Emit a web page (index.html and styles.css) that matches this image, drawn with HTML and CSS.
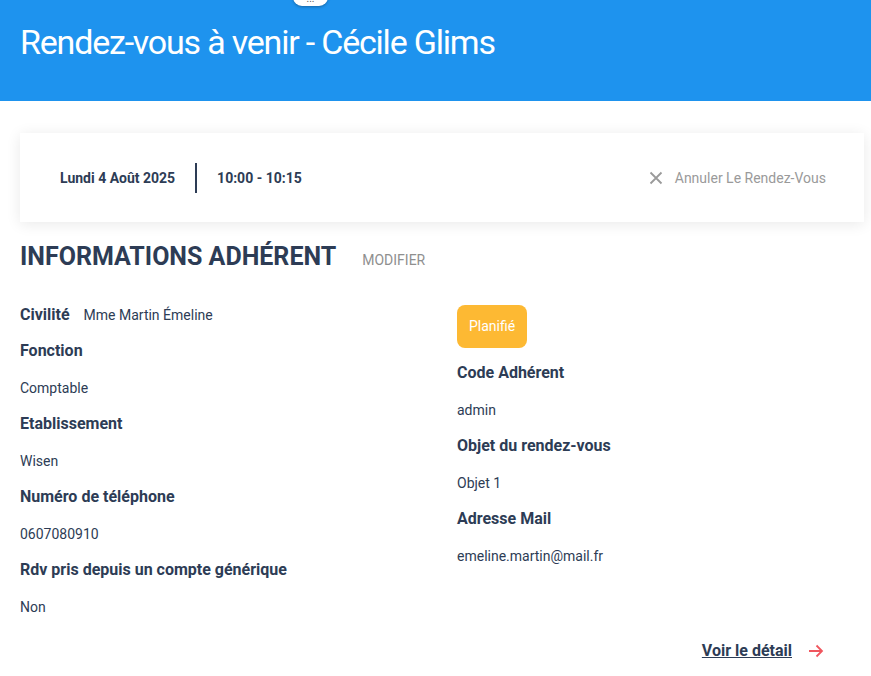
FILE: index.html
```html
<!DOCTYPE html>
<html lang="fr">
<head>
    <meta charset="UTF-8">
    <title>Rendez-vous à venir</title>
    <link rel="stylesheet" href="styles.css">
</head>
<body>
    <div class="topbar">
        <div class="handle">...</div>
        <h1>Rendez-vous à venir - Cécile Glims</h1>
    </div>

    <div class="page">
        <!-- Date / heure -->
        <div class="slot-card">
            <span class="slot-date">Lundi 4 Août 2025</span>
            <span class="slot-sep"></span>
            <span class="slot-time">10:00 - 10:15</span>
            <a class="cancel" href="#">
                <svg width="14" height="14" viewBox="0 0 14 14"><path d="M1.5 1.5 L12.5 12.5 M12.5 1.5 L1.5 12.5" stroke="#9a9a9a" stroke-width="1.8" fill="none"/></svg>
                Annuler Le Rendez-Vous
            </a>
        </div>

        <div class="section-head">
            <h2>INFORMATIONS ADHÉRENT</h2>
            <a class="edit" href="#">MODIFIER</a>
        </div>

        <div class="info-grid">
            <div class="col">
                <div class="inline-field">
                    <span class="label">Civilité</span>
                    <span class="value">Mme Martin Émeline</span>
                </div>
                <div class="label">Fonction</div>
                <div class="value">Comptable</div>
                <div class="label">Etablissement</div>
                <div class="value">Wisen</div>
                <div class="label">Numéro de téléphone</div>
                <div class="value">0607080910</div>
                <div class="label">Rdv pris depuis un compte générique</div>
                <div class="value">Non</div>
            </div>
            <div class="col">
                <div><span class="status">Planifié</span></div>
                <div class="label">Code Adhérent</div>
                <div class="value">admin</div>
                <div class="label">Objet du rendez-vous</div>
                <div class="value">Objet 1</div>
                <div class="label">Adresse Mail</div>
                <div class="value">emeline.martin@mail.fr</div>
            </div>
        </div>

        <div class="footer-link">
            <a class="detail" href="#">Voir le détail</a>
            <svg width="16" height="14" viewBox="0 0 16 14"><path d="M1 7 H14 M8.5 1.5 L14 7 L8.5 12.5" stroke="#f0565e" stroke-width="1.8" fill="none"/></svg>
        </div>
    </div>
</body>
</html>
```

FILE: styles.css
```css
body {
    margin: 0;
    font-family: Roboto, 'Liberation Sans', sans-serif;
    color: #2d3c55;
    background: #ffffff;
}
a {
    text-decoration: none;
}
.topbar {
    position: relative;
    height: 101px;
    background: #1e93ee;
    box-sizing: border-box;
    padding: 22px 20px 0;
}
.topbar h1 {
    margin: 0;
    font-weight: 400;
    font-size: 34px;
    color: #ffffff;
    letter-spacing: -1.2px;
}
.handle {
    position: absolute;
    left: 293px;
    top: -12px;
    width: 35px;
    height: 18px;
    border-radius: 9px;
    background: #ffffff;
    box-shadow: 0 1px 3px rgba(0, 0, 0, 0.3);
    font-size: 10px;
    line-height: 22px;
    text-align: center;
    color: #555;
}
.page {
    padding: 32px 7px 0 20px;
}
.slot-card {
    display: flex;
    align-items: center;
    height: 89px;
    padding: 0 38px 0 40px;
    background: #ffffff;
    box-shadow: 0 2px 14px rgba(0, 0, 0, 0.09);
    font-size: 14px;
    font-weight: 700;
}
.slot-sep {
    width: 2px;
    height: 30px;
    background: #2d3c55;
    margin: 0 20px;
}
.cancel {
    margin-left: auto;
    display: flex;
    align-items: center;
    gap: 12px;
    font-size: 14px;
    font-weight: 400;
    color: #9a9a9a;
}
.section-head {
    display: flex;
    align-items: baseline;
    gap: 26px;
    margin-top: 20px;
}
.section-head h2 {
    margin: 0;
    font-size: 25px;
    font-weight: 700;
}
.edit {
    font-size: 14px;
    color: #8f8f8f;
}
.info-grid {
    display: grid;
    grid-template-columns: 437px 1fr;
    margin-top: 34px;
}
.label {
    font-size: 16px;
    font-weight: 700;
    line-height: 19px;
}
.value {
    font-size: 14px;
    line-height: 17px;
    margin: 20px 0 17px;
}
.inline-field {
    display: flex;
    align-items: baseline;
    gap: 14px;
    margin-bottom: 17px;
}
.inline-field .value {
    margin: 0;
}
.status {
    display: inline-block;
    margin-top: 0;
    padding: 13px 12px;
    border-radius: 8px;
    background: #fdb933;
    color: #ffffff;
    font-size: 14px;
    line-height: 17px;
    margin-bottom: 15px;
}
.footer-link {
    display: flex;
    justify-content: flex-end;
    align-items: center;
    gap: 16px;
    padding-right: 40px;
    margin-top: 8px;
}
.detail {
    font-size: 16px;
    font-weight: 700;
    color: #2d3c55;
    text-decoration: underline;
}
```
